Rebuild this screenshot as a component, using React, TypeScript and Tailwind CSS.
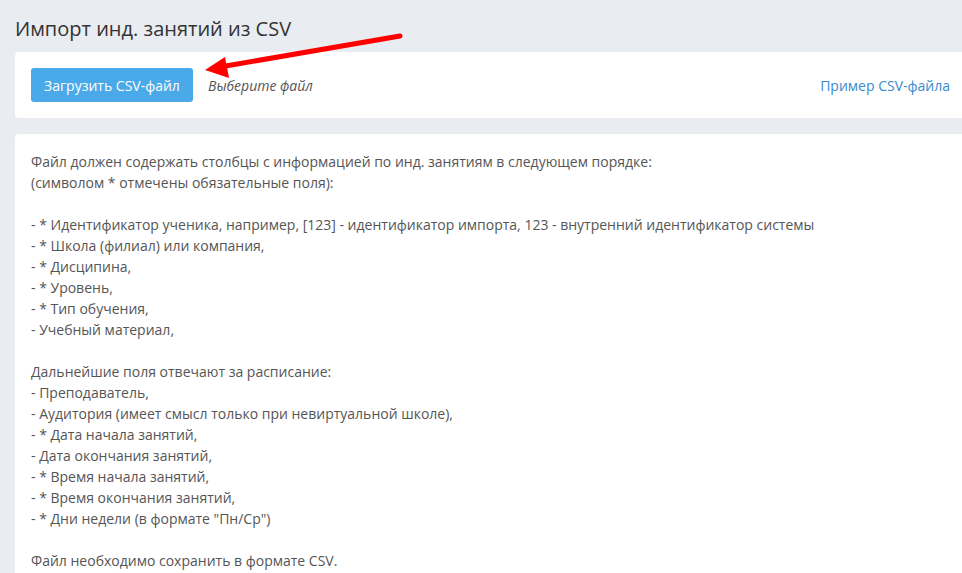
import React from "react";

const lines: string[] = [
  "Файл должен содержать столбцы с информацией по инд. занятиям в следующем порядке:",
  "(символом * отмечены обязательные поля):",
  "",
  "- * Идентификатор ученика, например, [123] - идентификатор импорта, 123 - внутренний идентификатор системы",
  "- * Школа (филиал) или компания,",
  "- * Дисципина,",
  "- * Уровень,",
  "- * Тип обучения,",
  "- Учебный материал,",
  "",
  "Дальнейшие поля отвечают за расписание:",
  "- Преподаватель,",
  "- Аудитория (имеет смысл только при невиртуальной школе),",
  "- * Дата начала занятий,",
  "- Дата окончания занятий,",
  "- * Время начала занятий,",
  "- * Время окончания занятий,",
  "- * Дни недели (в формате \"Пн/Ср\")",
  "",
  "Файл необходимо сохранить в формате CSV.",
];

export default function App() {
  return (
    <div
      className="relative w-[962px] h-[573px] overflow-hidden bg-[#e9ecf1] pl-[15px]"
      style={{ fontFamily: '"Open Sans", "Noto Sans", sans-serif' }}
    >
      <h1 className="pt-[15px] h-[52px] text-[20px] leading-[28px] text-[#333] font-normal">
        Импорт инд. занятий из CSV
      </h1>
      <div className="bg-white rounded-[4px] w-[960px] h-[66px] flex items-center pl-[16px] pr-[25px]">
        <button className="h-[34px] w-[162px] rounded-[3px] bg-[#4aa9e8] text-white text-[14px]">
          Загрузить CSV-файл
        </button>
        <span className="ml-[15px] italic text-[14px] text-[#555]">Выберите файл</span>
        <a className="ml-auto text-[14px] text-[#3a8ad0]" href="#">
          Пример CSV-файла
        </a>
      </div>
      <div className="mt-[16px] bg-white rounded-[4px] w-[960px] h-[460px] pl-[16px] pt-[17px]">
        {lines.map((l, i) => (
          <div key={i} className="h-[21px] leading-[21px] text-[14px] text-[#555] whitespace-pre">
            {l}
          </div>
        ))}
      </div>
      <svg
        className="absolute left-0 top-0 pointer-events-none"
        width="962"
        height="573"
        viewBox="0 0 962 573"
      >
        <line x1="400" y1="36" x2="220" y2="67" stroke="#f00" strokeWidth="5" strokeLinecap="round" />
        <polygon points="205,70 225,57 229,78" fill="#f00" />
      </svg>
    </div>
  );
}
